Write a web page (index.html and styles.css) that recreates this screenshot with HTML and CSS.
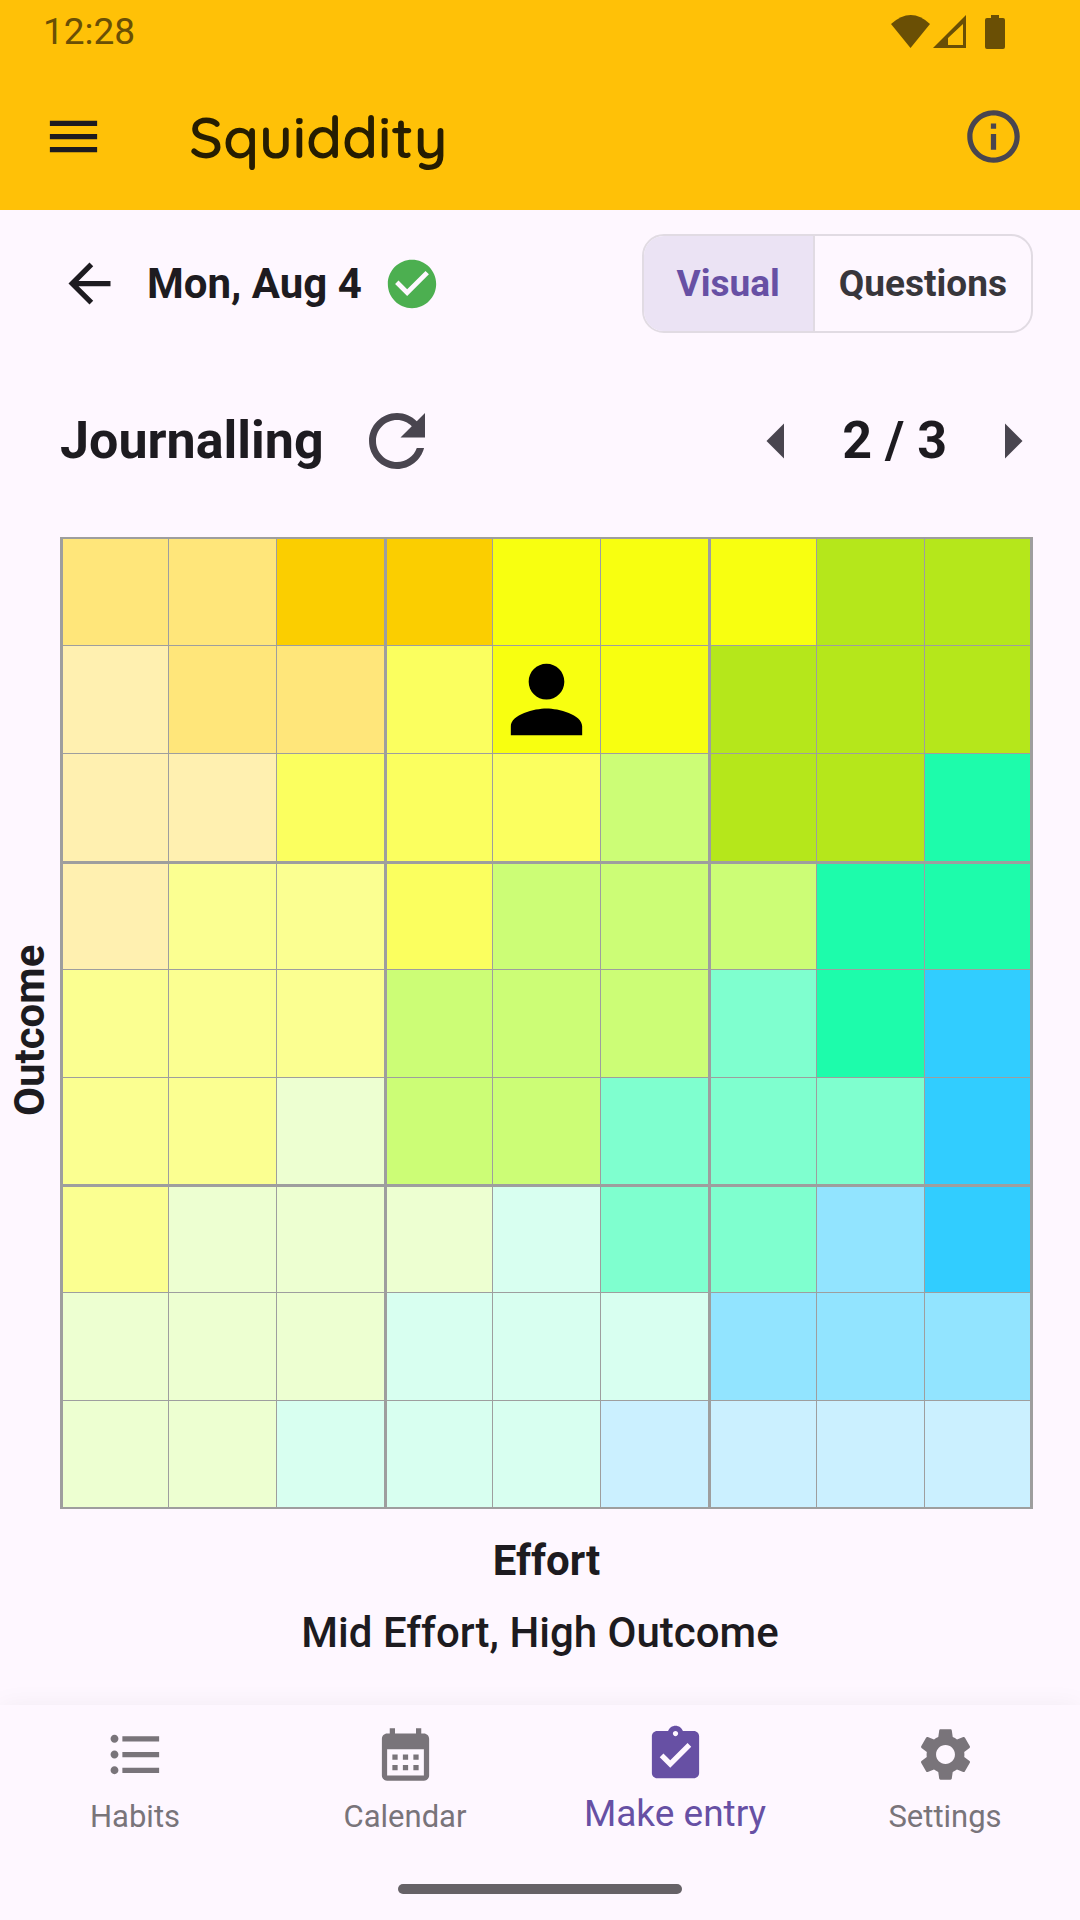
FILE: index.html
```html
<!DOCTYPE html>
<html lang="en">
<head>
<meta charset="utf-8">
<meta name="viewport" content="width=device-width">
<title>Squiddity</title>
<link rel="stylesheet" href="styles.css">
</head>
<body>
<header class="top">
  <div class="status">
    <span class="clock">12:28</span>
    <svg class="status-icons" width="114" height="34" viewBox="0 0 114 34" aria-hidden="true">
      <path d="M0 9Q20-9 39 9L19.500 33z"/>
      <path fill-rule="evenodd" d="M75 0V33H42zM72 9L57 23V30H72z"/>
      <path d="M100 0h8v3h4q2 0 2 2v27q0 2-2 2H96q-2 0-2-2V5q0-2 2-2h4z"/>
    </svg>
  </div>
  <div class="app-bar">
    <button class="icon-button menu" aria-label="Menu"><svg class="icon" viewBox="0 0 24 24"><path d="M3 18h18v-2H3v2zm0-5h18v-2H3v2zm0-7v2h18V6H3z"/></svg></button>
    <h1 class="title">Squiddity</h1>
    <button class="icon-button info" aria-label="Information"><svg class="icon" viewBox="0 0 24 24"><path d="M11 7h2v2h-2zm0 4h2v6h-2zm1-9C6.480 2 2 6.480 2 12s4.480 10 10 10 10-4.480 10-10S17.520 2 12 2zm0 18c-4.410 0-8-3.590-8-8s3.590-8 8-8 8 3.590 8 8-3.590 8-8 8z"/></svg></button>
  </div>
</header>

<main class="content">
  <div class="date-row">
    <button class="icon-button" aria-label="Previous day"><svg class="icon" viewBox="0 0 24 24"><path d="M20 11H7.830l5.590-5.590L12 4l-8 8 8 8 1.410-1.410L7.830 13H20v-2z"/></svg></button>
    <span class="date">Mon, Aug 4</span>
    <svg class="done" viewBox="0 0 24 24" role="img" aria-label="Complete"><path d="M12 2C6.480 2 2 6.480 2 12s4.480 10 10 10 10-4.480 10-10S17.520 2 12 2zm-2 15l-5-5 1.410-1.410L10 14.170l7.590-7.590L19 8l-9 9z"/></svg>
    <div class="segmented" role="radiogroup" aria-label="Entry mode">
      <input type="radio" name="mode" id="mode-visual" checked>
      <label for="mode-visual">Visual</label>
      <input type="radio" name="mode" id="mode-questions">
      <label for="mode-questions">Questions</label>
    </div>
  </div>

  <div class="habit-row">
    <h2 class="habit">Journalling</h2>
    <button class="icon-button large" aria-label="Reset"><svg class="icon" viewBox="0 0 24 24"><path d="M17.650 6.350C16.200 4.900 14.210 4 12 4c-4.420 0-7.990 3.580-7.990 8s3.570 8 7.990 8c3.730 0 6.840-2.550 7.730-6h-2.080c-.82 2.330-3.040 4-5.650 4-3.310 0-6-2.690-6-6s2.690-6 6-6c1.660 0 3.140.69 4.220 1.780L13 11h7V4l-2.350 2.350z"/></svg></button>
    <div class="pager">
      <button class="icon-button large" aria-label="Previous habit"><svg class="icon" viewBox="0 0 24 24"><path d="M14 7l-5 5 5 5V7z"/></svg></button>
      <span class="page">2 / 3</span>
      <button class="icon-button large" aria-label="Next habit"><svg class="icon" viewBox="0 0 24 24"><path d="M10 17l5-5-5-5v10z"/></svg></button>
    </div>
  </div>

  <div class="chart">
    <span class="axis axis-y">Outcome</span>
    <div class="matrix">
      <div class="row"><i class="sand"></i><i class="sand"></i><i class="gold"></i><i class="gold"></i><i class="lemon"></i><i class="lemon"></i><i class="lemon"></i><i class="lime"></i><i class="lime"></i></div>
      <div class="row"><i class="cream"></i><i class="sand"></i><i class="sand"></i><i class="canary"></i><i class="lemon"><svg class="person" viewBox="0 0 24 24" role="img" aria-label="Your entry"><path d="M12 12c2.210 0 4-1.790 4-4s-1.790-4-4-4-4 1.790-4 4 1.790 4 4 4zm0 2c-2.670 0-8 1.340-8 4v2h16v-2c0-2.660-5.330-4-8-4z"/></svg></i><i class="lemon"></i><i class="lime"></i><i class="lime"></i><i class="lime"></i></div>
      <div class="row"><i class="cream"></i><i class="cream"></i><i class="canary"></i><i class="canary"></i><i class="canary"></i><i class="pear"></i><i class="lime"></i><i class="lime"></i><i class="jade"></i></div>
      <div class="row"><i class="cream"></i><i class="straw"></i><i class="straw"></i><i class="canary"></i><i class="pear"></i><i class="pear"></i><i class="pear"></i><i class="jade"></i><i class="jade"></i></div>
      <div class="row"><i class="straw"></i><i class="straw"></i><i class="straw"></i><i class="pear"></i><i class="pear"></i><i class="pear"></i><i class="aqua"></i><i class="jade"></i><i class="azure"></i></div>
      <div class="row"><i class="straw"></i><i class="straw"></i><i class="mist"></i><i class="pear"></i><i class="pear"></i><i class="aqua"></i><i class="aqua"></i><i class="aqua"></i><i class="azure"></i></div>
      <div class="row"><i class="straw"></i><i class="mist"></i><i class="mist"></i><i class="mist"></i><i class="mint"></i><i class="aqua"></i><i class="aqua"></i><i class="sky"></i><i class="azure"></i></div>
      <div class="row"><i class="mist"></i><i class="mist"></i><i class="mist"></i><i class="mint"></i><i class="mint"></i><i class="mint"></i><i class="sky"></i><i class="sky"></i><i class="sky"></i></div>
      <div class="row"><i class="mist"></i><i class="mist"></i><i class="mint"></i><i class="mint"></i><i class="mint"></i><i class="ice"></i><i class="ice"></i><i class="ice"></i><i class="ice"></i></div>
    </div>
  </div>
  <p class="axis axis-x">Effort</p>
  <p class="summary">Mid Effort, High Outcome</p>
</main>

<footer class="bottom">
  <nav class="tabs">
    <a class="tab" href="#habits"><svg class="icon" viewBox="0 0 24 24"><path d="M4 10.500c-.83 0-1.500.67-1.500 1.500s.67 1.500 1.500 1.500 1.500-.67 1.500-1.500-.67-1.500-1.500-1.500zm0-6c-.83 0-1.500.67-1.500 1.500S3.170 7.500 4 7.500 5.500 6.830 5.500 6 4.830 4.500 4 4.500zm0 12c-.83 0-1.500.68-1.500 1.500s.68 1.500 1.500 1.500 1.500-.68 1.500-1.500-.67-1.500-1.500-1.500zM7 19h14v-2H7v2zm0-6h14v-2H7v2zm0-8v2h14V5H7z"/></svg><span>Habits</span></a>
    <a class="tab" href="#calendar"><svg class="icon" viewBox="0 0 24 24"><path d="M19 4h-1V2h-2v2H8V2H6v2H5c-1.110 0-1.990.9-1.990 2L3 20c0 1.100.89 2 2 2h14c1.100 0 2-.9 2-2V6c0-1.100-.9-2-2-2zm0 16H5V10h14v10zM9 14H7v-2h2v2zm4 0h-2v-2h2v2zm4 0h-2v-2h2v2zm-8 4H7v-2h2v2zm4 0h-2v-2h2v2zm4 0h-2v-2h2v2z"/></svg><span>Calendar</span></a>
    <a class="tab current" href="#entry" aria-current="page"><svg class="icon" viewBox="0 0 24 24"><path d="M19 3h-4.180C14.400 1.840 13.300 1 12 1c-1.300 0-2.400.84-2.820 2H5c-1.100 0-2 .9-2 2v14c0 1.100.9 2 2 2h14c1.100 0 2-.9 2-2V5c0-1.100-.9-2-2-2zm-7 0c.55 0 1 .45 1 1s-.45 1-1 1-1-.45-1-1 .45-1 1-1zm-2 14l-4-4 1.410-1.410L10 14.170l6.590-6.590L18 9l-8 8z"/></svg><span>Make entry</span></a>
    <a class="tab" href="#settings"><svg class="icon" viewBox="0 0 24 24"><path d="M19.140 12.940c.04-.3.06-.61.06-.94 0-.32-.02-.64-.07-.94l2.030-1.580c.18-.14.23-.41.12-.61l-1.920-3.320c-.12-.22-.37-.29-.59-.22l-2.390.96c-.5-.38-1.030-.7-1.620-.94L14.400 2.810c-.04-.24-.24-.41-.48-.41h-3.840c-.24 0-.43.17-.47.41L9.250 5.350C8.660 5.590 8.120 5.920 7.630 6.290L5.240 5.330c-.22-.08-.47 0-.59.22L2.740 8.870C2.620 9.080 2.660 9.340 2.860 9.480l2.030 1.580C4.840 11.360 4.800 11.690 4.800 12s.02.64.07.94l-2.030 1.580c-.18.14-.23.41-.12.61l1.920 3.320c.12.22.37.29.59.22l2.390-.96c.5.38 1.030.7 1.620.94l.36 2.540c.05.24.24.41.48.41h3.840c.24 0 .44-.17.47-.41l.36-2.540c.59-.24 1.130-.56 1.620-.94l2.390.96c.22.08.47 0 .59-.22l1.920-3.320c.12-.22.07-.47-.12-.61L19.140 12.940zM12 15.600c-1.980 0-3.600-1.620-3.600-3.600s1.620-3.600 3.600-3.600 3.600 1.620 3.600 3.600S13.980 15.600 12 15.600z"/></svg><span>Settings</span></a>
  </nav>
  <div class="home-bar"></div>
</footer>
</body>
</html>
```
FILE: styles.css
```css
* {
  box-sizing: border-box;
  margin: 0;
  padding: 0;
}

body {
  display: flex;
  flex-direction: column;
  min-height: 100vh;
  background: #fef7ff;
  color: #1d1b20;
  font-family: Roboto, "Liberation Sans", sans-serif;
}

svg {
  display: block;
  fill: currentColor;
}

.icon-button {
  flex: none;
  border: 0;
  background: none;
  color: inherit;
}

.icon {
  width: 63px;
  height: 63px;
}

.large {
  color: #49454f;
}

.large .icon {
  width: 84px;
  height: 84px;
}

/* Header */
.top {
  background: #ffc107;
}

.status {
  display: flex;
  justify-content: space-between;
  align-items: center;
  height: 63px;
  padding: 0 75px 0 43px;
  color: #6a4f05;
}

.clock {
  font-size: 37px;
  line-height: 44px;
}

.app-bar {
  display: flex;
  align-items: center;
  height: 147px;
  padding: 0 55px 0 42px;
}

.title {
  flex: 1;
  margin-left: 84px;
  color: #261d01;
  font-family: Quicksand, Inter, sans-serif;
  font-size: 58px;
  font-weight: 600;
  line-height: 72px;
}

.info {
  color: #49454f;
}

/* Date and habit rows */
.date-row {
  display: flex;
  align-items: center;
  height: 99px;
  margin: 24px 47px 0 58px;
}

.date {
  margin: 0 21px 0 26px;
  font-size: 42px;
  font-weight: 700;
}

.done {
  width: 58px;
  height: 58px;
  color: #4caf50;
}

.segmented {
  display: flex;
  height: 99px;
  margin-left: auto;
  border: 2px solid #e1dbe3;
  border-radius: 22px;
  overflow: hidden;
}

.segmented input {
  position: absolute;
  opacity: 0;
  pointer-events: none;
}

.segmented label {
  display: flex;
  align-items: center;
  padding: 0 24px;
  color: #38363b;
  font-size: 37px;
  font-weight: 700;
}

.segmented label:first-of-type {
  padding: 0 33px;
  border-right: 2px solid #e1dbe3;
}

.segmented input:checked + label {
  background: #ebe3f4;
  color: #6750a4;
}

.habit-row {
  display: flex;
  align-items: center;
  height: 84px;
  margin: 66px 26px 0 60px;
}

.habit,
.page {
  font-size: 52px;
  font-weight: 700;
  line-height: 64px;
}

.habit {
  margin-right: 31px;
}

.pager {
  display: flex;
  align-items: center;
  gap: 23px;
  margin-left: auto;
}

/* Effort and outcome matrix */
.chart {
  display: flex;
  margin: 54px 47px 0 0;
}

.axis {
  font-size: 42px;
  font-weight: 700;
}

.axis-y {
  width: 60px;
  padding-bottom: 14px;
  line-height: 60px;
  text-align: center;
  writing-mode: vertical-rl;
  transform: rotate(180deg);
}

.matrix {
  display: grid;
  flex: 1;
  grid-auto-rows: 1fr;
  gap: 1px;
  aspect-ratio: 973 / 972;
  border: 1px solid #9e9e9e;
  background: #9e9e9e;
}

.row {
  display: grid;
  grid-template-columns: repeat(9, 1fr);
  gap: 1px;
}

.row:nth-child(3n + 1) {
  padding-top: 2px;
}

.row:first-child {
  padding-top: 1px;
}

.row:last-child {
  padding-bottom: 1px;
}

.row i {
  display: grid;
  place-items: center;
  min-width: 0;
}

.row i:nth-child(3n + 1) {
  margin-left: 2px;
}

.row i:last-child {
  margin-right: 2px;
}

.person {
  width: 100%;
  color: #000;
}

.sand { background: #ffe67a; }
.gold { background: #fbce00; }
.lemon { background: #f8ff10; }
.lime { background: #b5e71b; }
.cream { background: #fff0b0; }
.canary { background: #fbff5f; }
.pear { background: #ccfd76; }
.jade { background: #1dfcab; }
.straw { background: #fbff91; }
.aqua { background: #7fffcf; }
.azure { background: #31cdff; }
.mist { background: #edffd1; }
.mint { background: #d8fff0; }
.sky { background: #92e4ff; }
.ice { background: #cbf0ff; }

.axis-x,
.summary {
  line-height: 52px;
  text-align: center;
}

.axis-x {
  margin: 26px 0 20px;
  padding-left: 13px;
}

.summary {
  font-size: 42px;
  font-weight: 500;
}

/* Bottom navigation */
.bottom {
  margin-top: auto;
  background: #fef7ff;
  box-shadow: 0 0 24px rgba(0, 0, 0, 0.05);
}

.tabs {
  display: grid;
  grid-template-columns: repeat(4, 1fr);
}

.tab {
  display: flex;
  flex-direction: column;
  align-items: center;
  gap: 9px;
  padding-top: 18px;
  color: #79747a;
  font-size: 31px;
  line-height: 44px;
  text-decoration: none;
}

.current {
  gap: 6px;
  color: #6750a4;
  font-size: 37px;
}

.home-bar {
  width: 284px;
  height: 10px;
  margin: 45px auto 26px;
  border-radius: 5px;
  background: #666267;
}
```
